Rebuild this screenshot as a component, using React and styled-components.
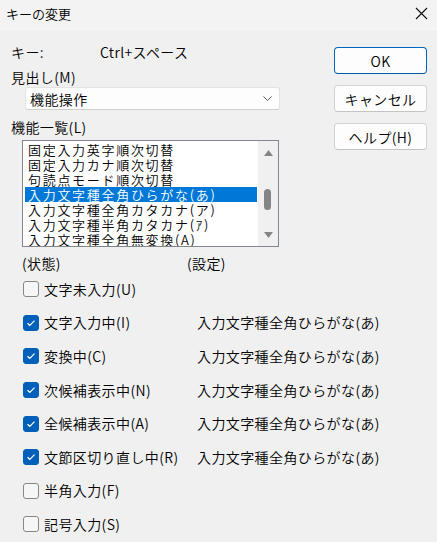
import React from "react";
import styled, { createGlobalStyle } from "styled-components";

const GlobalStyle = createGlobalStyle`
  html, body { margin: 0; padding: 0; background: #f0f0f0; }
  body {
    font-family: "Noto Sans CJK JP", "Noto Sans", sans-serif;
    font-size: 14px;
    font-weight: 350;
    letter-spacing: 0.4px;
    color: #000;
  }
`;

const Window = styled.div`
  width: 437px;
  height: 542px;
  overflow: hidden;
  background: #f0f0f0;
  display: flex;
  flex-direction: column;
`;

const TitleBar = styled.div`
  height: 31px;
  flex: none;
  background: #f3f3f3;
  display: flex;
  align-items: center;
  justify-content: space-between;
  padding: 0 9px 5px 6px;
  box-sizing: border-box;
  font-size: 13px;
  letter-spacing: 0;
`;

const CloseIcon = styled.svg`
  width: 13px;
  height: 13px;
`;

const Body = styled.div`
  display: flex;
  justify-content: space-between;
`;

const LeftCol = styled.div`
  padding: 11px 0 0 11px;
  display: flex;
  flex-direction: column;
  width: 312px;
`;

const KeyRow = styled.div`
  display: grid;
  grid-template-columns: 89px auto;
  line-height: 20px;
`;

const Label = styled.div`
  line-height: 20px;
  margin-top: ${(p) => p.$mt || 0}px;
`;

const Combo = styled.div`
  margin: 0 0 0 14px;
  width: 255px;
  height: 23px;
  box-sizing: border-box;
  background: #fdfdfd;
  border: 1px solid #e3e3e3;
  border-bottom-color: #cfcfcf;
  border-radius: 3px;
  display: flex;
  align-items: center;
  justify-content: space-between;
  padding: 0 7px 0 4px;
  line-height: 20px;
`;

const ListBox = styled.div`
  margin: 3px 0 0 11px;
  width: 257px;
  height: 107px;
  box-sizing: border-box;
  border: 1px solid #82878f;
  background: #fff;
  display: flex;
  overflow: hidden;
`;

const Items = styled.div`
  flex: 1;
  padding: 1px 1px 0 2px;
  overflow: hidden;
`;

const Item = styled.div`
  height: 15px;
  line-height: 15px;
  font-size: 13px;
  letter-spacing: 1.7px;
  padding-left: 3px;
  white-space: nowrap;
  background: ${(p) => (p.$sel ? "#0078d7" : "transparent")};
  color: ${(p) => (p.$sel ? "#fff" : "#000")};
`;

const ScrollBar = styled.div`
  width: 20px;
  flex: none;
  background: #f0f0f0;
  position: relative;
`;

const Arrow = styled.svg`
  position: absolute;
  left: 6px;
  width: 9px;
  height: 6px;
  top: ${(p) => p.$top}px;
`;

const Thumb = styled.div`
  position: absolute;
  left: 6px;
  top: 48px;
  width: 7px;
  height: 21px;
  border-radius: 4px;
  background: #858585;
`;

const Header = styled.div`
  display: grid;
  grid-template-columns: 165px auto;
  margin: 8px 0 0 11px;
  line-height: 17px;
`;

const Rows = styled.div`
  display: flex;
  flex-direction: column;
  margin-left: 12px;
`;

const Row = styled.div`
  height: 33.6px;
  display: grid;
  grid-template-columns: 16px 148px auto;
  column-gap: 5px;
  align-items: center;
  white-space: nowrap;
`;

const Box = styled.div`
  width: 16px;
  height: 16px;
  margin-top: 1px;
  box-sizing: border-box;
  border-radius: 3px;
  background: ${(p) => (p.$on ? "#005fb8" : "#f6f6f6")};
  border: 1px solid ${(p) => (p.$on ? "#005fb8" : "#878787")};
  display: flex;
  align-items: center;
  justify-content: center;
`;

const RightCol = styled.div`
  padding: 16px 10px 0 0;
  display: flex;
  flex-direction: column;
  gap: 11px;
`;

const Button = styled.div`
  width: 93px;
  height: 27px;
  box-sizing: border-box;
  background: #fdfdfd;
  border: 1px solid ${(p) => (p.$primary ? "#0067c0" : "#d3d3d3")};
  border-bottom-color: ${(p) => (p.$primary ? "#0058a8" : "#c4c4c4")};
  border-radius: 4px;
  display: flex;
  align-items: center;
  justify-content: center;
  line-height: 20px;
`;

const items = [
  "固定入力英字順次切替",
  "固定入力カナ順次切替",
  "句読点モード順次切替",
  "入力文字種全角ひらがな(あ)",
  "入力文字種全角カタカナ(ア)",
  "入力文字種半角カタカナ(ｱ)",
  "入力文字種全角無変換(A)",
];

const rows = [
  ["文字未入力(U)", false, ""],
  ["文字入力中(I)", true, "入力文字種全角ひらがな(あ)"],
  ["変換中(C)", true, "入力文字種全角ひらがな(あ)"],
  ["次候補表示中(N)", true, "入力文字種全角ひらがな(あ)"],
  ["全候補表示中(A)", true, "入力文字種全角ひらがな(あ)"],
  ["文節区切り直し中(R)", true, "入力文字種全角ひらがな(あ)"],
  ["半角入力(F)", false, ""],
  ["記号入力(S)", false, ""],
];

const Check = () => (
  <svg width="10" height="8" viewBox="0 0 10 8">
    <path d="M1.5 4.2 L3.8 6.3 L8.5 1.6" fill="none" stroke="#fff" strokeWidth="1.2" />
  </svg>
);

export default function App() {
  return (
    <>
      <GlobalStyle />
      <Window>
        <TitleBar>
          <span>キーの変更</span>
          <CloseIcon viewBox="0 0 13 13">
            <path d="M1 1 L12 12 M12 1 L1 12" stroke="#111" strokeWidth="1.1" />
          </CloseIcon>
        </TitleBar>
        <Body>
          <LeftCol>
            <KeyRow>
              <span>キー:</span>
              <span>Ctrl+スペース</span>
            </KeyRow>
            <Label $mt={5}>見出し(M)</Label>
            <Combo>
              <span>機能操作</span>
              <svg width="9" height="5" viewBox="0 0 9 5">
                <path d="M0.5 0.5 L4.5 4.5 L8.5 0.5" fill="none" stroke="#555" strokeWidth="1" />
              </svg>
            </Combo>
            <Label $mt={7}>機能一覧(L)</Label>
            <ListBox>
              <Items>
                {items.map((t, i) => (
                  <Item key={i} $sel={i === 3}>
                    {t}
                  </Item>
                ))}
              </Items>
              <ScrollBar>
                <Arrow $top={9} viewBox="0 0 9 6">
                  <path d="M4.5 0 L9 6 L0 6 Z" fill="#858585" />
                </Arrow>
                <Thumb />
                <Arrow $top={91} viewBox="0 0 9 6">
                  <path d="M0 0 L9 0 L4.5 6 Z" fill="#858585" />
                </Arrow>
              </ScrollBar>
            </ListBox>
            <Header>
              <span>(状態)</span>
              <span>(設定)</span>
            </Header>
            <Rows>
              {rows.map(([label, on, setting], i) => (
                <Row key={i}>
                  <Box $on={on}>{on && <Check />}</Box>
                  <span>{label}</span>
                  <span>{setting}</span>
                </Row>
              ))}
            </Rows>
          </LeftCol>
          <RightCol>
            <Button $primary>OK</Button>
            <Button>キャンセル</Button>
            <Button>ヘルプ(H)</Button>
          </RightCol>
        </Body>
      </Window>
    </>
  );
}
